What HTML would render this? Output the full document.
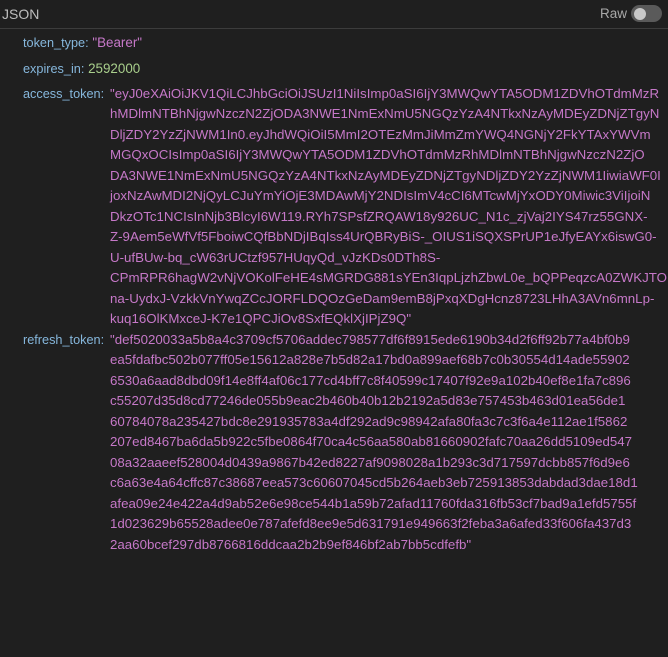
<!DOCTYPE html>
<html><head><meta charset="utf-8"><style>
html,body{margin:0;padding:0;background:#1f1f1f;width:668px;height:657px;overflow:hidden;font-family:"Liberation Sans",sans-serif;}
.hdr{height:28px;border-bottom:1px solid #3c3c3c;position:relative;color:#bdbdbd;font-size:14px;}
.hdr .t{position:absolute;left:2px;top:6px;}
.hdr .raw{position:absolute;left:600px;top:6px;color:#a8a8a8;font-size:13.5px;}
.tog{position:absolute;left:631px;top:5px;width:31px;height:17px;border-radius:9px;background:#5a5a5a;}
.tog:after{content:"";position:absolute;left:3px;top:2.5px;width:12px;height:12px;border-radius:50%;background:#c8c8c8;}
.row{position:absolute;left:23px;font-size:13.4px;white-space:nowrap;}
.k{color:#86b7dc;font-size:12.7px;}
.s{color:#c678c8;}
.n{color:#a9cf8c;}
.v{position:absolute;white-space:pre;font-size:13.3px;color:#c678c8;line-height:20.45px;}
</style></head><body>
<div class="hdr"><span class="t">JSON</span><span class="raw">Raw</span><div class="tog"></div></div>
<div class="row" style="top:35px"><span class="k">token_type:</span> <span class="s">"Bearer"</span></div>
<div class="row" style="top:61px"><span class="k">expires_in:</span> <span class="n">2592000</span></div>
<div class="row" style="top:86px"><span class="k">access_token:</span></div>
<div class="v" style="left:110px;top:84px">"eyJ0eXAiOiJKV1QiLCJhbGciOiJSUzI1NiIsImp0aSI6IjY3MWQwYTA5ODM1ZDVhOTdmMzR
hMDlmNTBhNjgwNzczN2ZjODA3NWE1NmExNmU5NGQzYzA4NTkxNzAyMDEyZDNjZTgyN
DljZDY2YzZjNWM1In0.eyJhdWQiOiI5MmI2OTEzMmJiMmZmYWQ4NGNjY2FkYTAxYWVm
MGQxOCIsImp0aSI6IjY3MWQwYTA5ODM1ZDVhOTdmMzRhMDlmNTBhNjgwNzczN2ZjO
DA3NWE1NmExNmU5NGQzYzA4NTkxNzAyMDEyZDNjZTgyNDljZDY2YzZjNWM1IiwiaWF0I
joxNzAwMDI2NjQyLCJuYmYiOjE3MDAwMjY2NDIsImV4cCI6MTcwMjYxODY0Miwic3ViIjoiN
DkzOTc1NCIsInNjb3BlcyI6W119.RYh7SPsfZRQAW18y926UC_N1c_zjVaj2IYS47rz55GNX-
Z-9Aem5eWfVf5FboiwCQfBbNDjIBqIss4UrQBRyBiS-_OIUS1iSQXSPrUP1eJfyEAYx6iswG0-
U-ufBUw-bq_cW63rUCtzf957HUqyQd_vJzKDs0DTh8S-
CPmRPR6hagW2vNjVOKolFeHE4sMGRDG881sYEn3IqpLjzhZbwL0e_bQPPeqzcA0ZWKJTO
na-UydxJ-VzkkVnYwqZCcJORFLDQOzGeDam9emB8jPxqXDgHcnz8723LHhA3AVn6mnLp-
kuq16OlKMxceJ-K7e1QPCJiOv8SxfEQklXjIPjZ9Q"</div>
<div class="row" style="top:332px"><span class="k">refresh_token:</span></div>
<div class="v" style="left:110px;top:330px">"def5020033a5b8a4c3709cf5706addec798577df6f8915ede6190b34d2f6ff92b77a4bf0b9
ea5fdafbc502b077ff05e15612a828e7b5d82a17bd0a899aef68b7c0b30554d14ade55902
6530a6aad8dbd09f14e8ff4af06c177cd4bff7c8f40599c17407f92e9a102b40ef8e1fa7c896
c55207d35d8cd77246de055b9eac2b460b40b12b2192a5d83e757453b463d01ea56de1
60784078a235427bdc8e291935783a4df292ad9c98942afa80fa3c7c3f6a4e112ae1f5862
207ed8467ba6da5b922c5fbe0864f70ca4c56aa580ab81660902fafc70aa26dd5109ed547
08a32aaeef528004d0439a9867b42ed8227af9098028a1b293c3d717597dcbb857f6d9e6
c6a63e4a64cffc87c38687eea573c60607045cd5b264aeb3eb725913853dabdad3dae18d1
afea09e24e422a4d9ab52e6e98ce544b1a59b72afad11760fda316fb53cf7bad9a1efd5755f
1d023629b65528adee0e787afefd8ee9e5d631791e949663f2feba3a6afed33f606fa437d3
2aa60bcef297db8766816ddcaa2b2b9ef846bf2ab7bb5cdfefb"</div>
</body></html>
